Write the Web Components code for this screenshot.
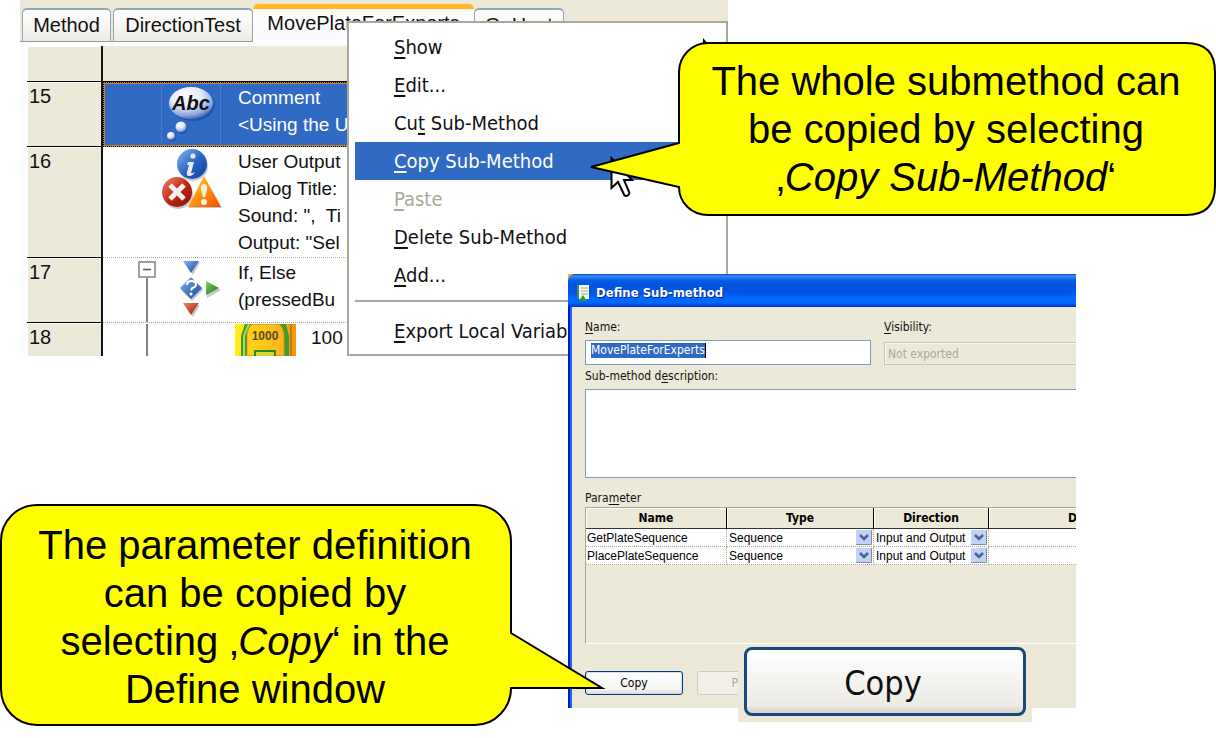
<!DOCTYPE html>
<html lang="en">
<head>
<meta charset="utf-8">
<title>Copying sub-methods</title>
<style>
  html, body { margin: 0; background: #fff; }
  body { min-height: 100vh; font-family: "Liberation Sans", Arial, sans-serif; color: #000; }
</style>
</head>
<body>
<slide-canvas>
  <method-editor slot="editor"></method-editor>
  <context-menu slot="menu">
    <menu-item arrow><u>S</u>how</menu-item>
    <menu-item><u>E</u>dit...</menu-item>
    <menu-item>Cu<u>t</u> Sub-Method</menu-item>
    <menu-item active><u>C</u>opy Sub-Method</menu-item>
    <menu-item disabled><u>P</u>aste</menu-item>
    <menu-item><u>D</u>elete Sub-Method</menu-item>
    <menu-item><u>A</u>dd...</menu-item>
    <menu-divider></menu-divider>
    <menu-item><u>E</u>xport Local Variab</menu-item>
  </context-menu>
  <mouse-pointer slot="pointer"></mouse-pointer>
  <define-dialog slot="dialog"></define-dialog>
  <copy-magnifier slot="magnifier">Copy</copy-magnifier>
  <call-out slot="note-top" tail="left">The whole submethod can<br>be copied by selecting<br>‚<i>Copy Sub-Method</i>‘</call-out>
  <call-out slot="note-bottom" tail="right">The parameter definition<br>can be copied by<br>selecting ‚<i>Copy</i>‘ in the<br>Define window</call-out>
</slide-canvas>

<script>
const define = (name, html, setup) => {
  const template = document.createElement('template');
  template.innerHTML = html;
  customElements.define(name, class extends HTMLElement {
    constructor() {
      super();
      this.attachShadow({ mode: 'open' }).append(template.content.cloneNode(true));
    }
    connectedCallback() { if (setup) setup(this, this.shadowRoot); }
  });
};

/* Free canvas: overlapping windows and notes pinned to their places */
define('slide-canvas', `
<style>
  :host { display: block; position: relative; min-height: 100vh; overflow: hidden; }
  ::slotted(*) { position: absolute; }
  ::slotted([slot=editor]) { left: 20px; top: 0; width: 708px; }
  ::slotted([slot=menu]) { left: 347px; top: 21px; width: 381px; }
  ::slotted([slot=pointer]) { left: 610px; top: 156px; }
  ::slotted([slot=dialog]) { left: 568px; top: 274px; width: 508px; }
  ::slotted([slot=magnifier]) { left: 738px; top: 644px; }
  ::slotted([slot=note-top]) { left: 678px; top: 42px; width: 538px; }
  ::slotted([slot=note-bottom]) { left: 0; top: 504px; width: 512px; }
</style>
<slot name="editor"></slot><slot name="menu"></slot><slot name="pointer"></slot>
<slot name="dialog"></slot><slot name="magnifier"></slot>
<slot name="note-top"></slot><slot name="note-bottom"></slot>`);

define('tab-button', `
<style>
  :host { display: block; }
  button { box-sizing: border-box; font: 20px/24px "Liberation Sans", Arial, sans-serif; color: #111; margin: 0; padding: 3px 0 4px;
    width: 100%; height: 34px; white-space: nowrap; border: 1px solid #91a7b4; border-width: 2px 1px 1px; border-bottom-color: #919b9c;
    border-radius: 5px 5px 0 0; background: linear-gradient(#fff, #f4f3ee 70%, #ecebe4); display: block; }
  :host([active]) button { height: 38px; background: #fcfcfe; padding: 2px 0 7px; border: 0;
    border-top: 5px solid #ffb92e; box-shadow: inset 0 1px #fff3d8; }
</style>
<button type="button" role="tab"><slot></slot></button>`);

define('method-row', `
<style>
  :host { display: grid; grid-template-columns: 74px 2px 1fr; line-height: 27px; font-size: 19px; color: #111;
    min-height: 33px; margin-left: 7px; }
  .num { background: #ece9d8; padding: 1px 0 0 2px; font-size: 20px; border-bottom: 1px solid #000; box-shadow: inset 1px 1px #fff; }
  .rule { background: #111; }
  .body { display: grid; grid-template-columns: 34px 24px 74px 1fr; padding-top: 1px;
    border-bottom: 1px dotted #aca899; background: #fff; }
  .tree { grid-column: 2; display: flex; flex-direction: column; align-items: center; width: 20px; }
  .icon { grid-column: 3; display: flex; align-items: flex-start; }
  .icon ::slotted(svg) { display: block; }
  .text { grid-column: 4; padding-left: 3px; white-space: nowrap; }
  :host([nested]) .body { grid-template-columns: 34px 24px 74px 72px 1fr; }
  :host([nested]) .icon { grid-column: 4; }
  :host([nested]) .text { grid-column: 5; padding-left: 4px; }
  :host([selected]) .body { background: #316ac5; color: #fff; border: 2px solid #c4862b; outline: 1px dotted #000;
    outline-offset: -1px; grid-template-columns: 32px 24px 74px 1fr; padding-top: 0; }
  :host([last]) .num, :host([last]) .body { border-bottom: 0; }
  :host([header]) { min-height: 36px; }
  :host([header]) .body { background: #ece9d8; border-bottom: 1px solid #000; }
</style>
<div class="num"><slot name="num"></slot></div>
<div class="rule"></div>
<div class="body">
  <div class="tree"><slot name="tree"></slot></div>
  <div class="icon"><slot name="icon"></slot></div>
  <div class="text"><slot></slot></div>
</div>`);

define('method-editor', `
<style>
  :host { display: block; background: #ece9d8; }
  .tabs { display: grid; grid-template-columns: 89px 142px 221px 90px; align-items: end;
    padding: 4px 0 0 2px; height: 38px; box-shadow: inset 0 -1px #919b9c; }
  .tabs tab-button:nth-child(2) { margin-left: 2px; }
  .gap { height: 4px; background: #fcfcfe; }
  .rows { background: #fcfcfe; height: 310px; overflow: hidden; }
  method-row.comment { height: 65px; }
  method-row.output { height: 111px; }
  method-row.branch { height: 65px; }
  .minus { display: block; }
</style>
<div class="tabs" role="tablist">
  <tab-button>Method</tab-button>
  <tab-button>DirectionTest</tab-button>
  <tab-button active>MovePlateForExperts</tab-button>
  <tab-button>OnHost</tab-button>
</div>
<div class="gap"></div>
<div class="rows">
  <method-row header></method-row>
  <method-row class="comment" selected>
    <span slot="num">15</span>
    <svg slot="icon" width="60" height="60" viewBox="0 0 60 60">
      <defs>
        <radialGradient id="cb" cx=".38" cy=".25" r=".8"><stop offset="0" stop-color="#fff"/><stop offset=".45" stop-color="#e4eaf8"/><stop offset=".8" stop-color="#8ba6de"/><stop offset="1" stop-color="#3158b0"/></radialGradient>
      </defs>
      <path d="M.5 0V60M59.5 0V60" stroke="#4a7bcd"/>
      <ellipse cx="32" cy="21" rx="22" ry="16" fill="#1c4694" opacity=".6"/>
      <ellipse cx="30" cy="19" rx="22" ry="16" fill="url(#cb)"/>
      <circle cx="21" cy="44" r="6" fill="#1c4694" opacity=".6"/><circle cx="20" cy="43" r="5.5" fill="url(#cb)"/>
      <circle cx="11" cy="53" r="4.500" fill="#1c4694" opacity=".6"/><circle cx="10" cy="52" r="4" fill="url(#cb)"/>
      <text x="30" y="26" text-anchor="middle" font-family="Liberation Sans, sans-serif" font-size="20" font-weight="700" font-style="italic" fill="#111">Abc</text>
    </svg>
    Comment<br>&lt;Using the U
  </method-row>
  <method-row class="output">
    <span slot="num">16</span>
    <svg slot="icon" width="62" height="62" viewBox="0 0 62 62">
      <defs>
        <linearGradient id="bl" x1="0" y1="0" x2="1" y2="1"><stop offset="0" stop-color="#8dbaf0"/><stop offset=".5" stop-color="#2c67c8"/><stop offset="1" stop-color="#0b3c9a"/></linearGradient>
        <linearGradient id="rd" x1="0" y1="0" x2="1" y2="1"><stop offset="0" stop-color="#ee8a6c"/><stop offset=".5" stop-color="#c02a14"/><stop offset="1" stop-color="#860d08"/></linearGradient>
        <linearGradient id="og" x1="0" y1="0" x2="1" y2="1"><stop offset="0" stop-color="#ffd21a"/><stop offset=".5" stop-color="#ff9410"/><stop offset="1" stop-color="#f04a00"/></linearGradient>
      </defs>
      <circle cx="32" cy="18" r="15" fill="#777" opacity=".4"/>
      <circle cx="31" cy="16" r="15" fill="url(#bl)"/>
      <circle cx="32" cy="8" r="2.600" fill="#e6ebf5"/>
      <path d="M27 14h6l-3 11q1 1 4-1-2 4-6 4-3 0-2-4l2-7h-2z" fill="#e6ebf5"/>
      <circle cx="17" cy="46" r="15" fill="#777" opacity=".4"/>
      <circle cx="16" cy="44" r="15" fill="url(#rd)"/>
      <path d="M9 37l14 14M23 37l-14 14" stroke="#f1eeee" stroke-width="5"/>
      <path d="M44 30L61 60H28z" fill="#777" opacity=".4"/>
      <path d="M43 28L60 59H27z" fill="url(#og)"/>
      <path d="M43 36q4 0 3 6l-2 7h-2l-2-7q-1-6 3-6z" fill="#eef0da"/><circle cx="43" cy="54" r="3" fill="#eef0da"/>
    </svg>
    User Output<br>Dialog Title:<br>Sound: ",&nbsp; Ti<br>Output: "Sel
  </method-row>
  <method-row class="branch">
    <span slot="num">17</span>
    <svg class="minus" slot="tree" width="18" height="63" viewBox="0 0 18 63">
      <path d="M9 19V63" stroke="#808080" stroke-width="2"/><rect x="1" y="3" width="16" height="15" fill="#fff" stroke="#808080" stroke-width="1.500"/><path d="M5 10.500H13" stroke="#555" stroke-width="1.500"/>
    </svg>
    <svg slot="icon" width="60" height="60" viewBox="0 0 60 60">
      <defs>
        <linearGradient id="b2" x1="0" y1="0" x2="1" y2="1"><stop offset="0" stop-color="#88b4ee"/><stop offset="1" stop-color="#0e429f"/></linearGradient>
        <linearGradient id="r2" x1="0" y1="0" x2="1" y2="1"><stop offset="0" stop-color="#ee8a6c"/><stop offset="1" stop-color="#980f08"/></linearGradient>
        <linearGradient id="g2" x1="0" y1="0" x2="1" y2="1"><stop offset="0" stop-color="#7ed25f"/><stop offset="1" stop-color="#117215"/></linearGradient>
      </defs>
      <g fill="#777" opacity=".4"><path d="M24 3h15L32 16z"/><path d="M31 19l11 12-11 11-11-11z"/><path d="M46 24l14 7-14 8z"/><path d="M24 46h15L32 58z"/></g>
      <path d="M22 2H38L30 14z" fill="url(#b2)"/>
      <path d="M30 18L41 29 30 40 19 29z" fill="url(#b2)"/>
      <path d="M26 26q0-4 4.500-4t4.500 3.500q0 2-2.500 3t-2 3" fill="none" stroke="#fff" stroke-width="2"/><circle cx="30" cy="35" r="1.500" fill="#fff"/>
      <path d="M45 22L58 29 45 36z" fill="url(#g2)"/>
      <path d="M22 44H38L30 56z" fill="url(#r2)"/>
    </svg>
    If, Else<br>(pressedBu
  </method-row>
  <method-row nested last>
    <span slot="num">18</span>
    <svg class="minus" slot="tree" width="18" height="32" viewBox="0 0 18 32"><path d="M9 0V32" stroke="#808080" stroke-width="2"/></svg>
    <svg slot="icon" width="61" height="32" viewBox="0 0 61 32">
      <defs><linearGradient id="y" x1="0" x2="1"><stop offset="0" stop-color="#fff11c"/><stop offset="1" stop-color="#f59410"/></linearGradient>
      <linearGradient id="y2" x1="0" x2="1"><stop offset="0" stop-color="#ffd51a"/><stop offset="1" stop-color="#ffb321"/></linearGradient></defs>
      <path d="M0 0H61V32H0z" fill="url(#y)"/><path d="M55 0h2v32h-2z" fill="#b97a20"/>
      <path d="M6 32V12Q8 6 10 0H51q1 6 3 12V32z" fill="#3c9c35"/>
      <path d="M9 32V12q2-6 5-12" fill="none" stroke="#a5dc58" stroke-width="2"/>
      <path d="M12 32V10Q13 3 17 0H44q4 3 5 10V32z" fill="url(#y2)" stroke="#e58a12"/>
      <text x="30" y="16" text-anchor="middle" font-family="Liberation Sans, sans-serif" font-weight="700" font-size="12" fill="#5b4a1e">1000</text>
      <path d="M20 27H40V33H20z" fill="none" stroke="#248c26" stroke-width="2"/><path d="M22 29h16v3H22z" fill="#c6dd3c"/>
    </svg>
    100
  </method-row>
</div>`);

define('context-menu', `
<style>
  :host { display: block; box-sizing: border-box; padding: 5px 5px 4px 6px; background: #fff; border: 2px solid #aca899;
    font: 20px/38px "DejaVu Sans Condensed", "DejaVu Sans", Tahoma, sans-serif; height: 335px; }
</style>
<div role="menu"><slot></slot></div>`);

define('menu-item', `
<style>
  :host { display: block; }
  button { font: inherit; color: #111; display: flex; align-items: center; justify-content: space-between; width: 100%; height: 38px;
    margin: 0; border: 0; padding: 0 10px 0 39px; background: none; text-align: left; white-space: nowrap; }
  :host([active]) button { background: #316ac5; color: #fff; }
  button:disabled { color: #aca899; }
  svg { display: none; }
  :host([arrow]) svg { display: block; }
  ::slotted(u) { text-underline-offset: 3px; text-decoration-thickness: 2px; text-decoration-skip-ink: none; }
</style>
<button type="button" role="menuitem"><span><slot></slot></span>
<svg width="9" height="18" viewBox="0 0 9 18"><path d="M1 0L9 9 1 18z" fill="#000"/></svg></button>`,
(host, root) => { root.querySelector('button').disabled = host.hasAttribute('disabled'); });

define('menu-divider', `
<style>
  :host { display: block; padding: 6px 0 10px; }
  div { height: 2px; background: #aca899; }
</style>
<div role="separator"></div>`);

define('mouse-pointer', `
<style>:host { display: block; } svg { display: block; }</style>
<svg width="24" height="42" viewBox="0 0 24 42" aria-hidden="true">
  <path d="M1.500 2V32L8 26 14.500 39.500Q18 41 19.500 37L14 24H22z" fill="#fff" stroke="#000" stroke-width="2"/>
</svg>`);

/* Table cell drop-down with its arrow button */
define('cell-select', `
<style>
  :host { display: flex; height: 17px; }
  select { appearance: none; flex: 1; min-width: 0; font: 12px/16px "Liberation Sans", Arial, sans-serif; color: #000;
    border: 0; margin: 0; padding: 0 0 0 1px; background: #fff; }
  svg { display: block; flex: none; margin-right: 1px; }
</style>
<select></select>
<svg width="16" height="17" viewBox="0 0 16 17" aria-hidden="true">
  <path d="M0 1H15V16H0z" fill="#c1d3fb"/><path d="M0 15.500H15.500V1" fill="none" stroke="#8a8f92"/>
  <path d="M4 6l4 4 4-4" fill="none" stroke="#4d6185" stroke-width="2.500"/>
</svg>`, (host, root) => {
  const select = root.querySelector('select');
  select.setAttribute('aria-label', host.getAttribute('label'));
  select.replaceChildren(new Option(host.getAttribute('value')));
});

define('define-dialog', `
<style>
  :host { display: block; overflow: hidden; background: linear-gradient(#ffad2c, #ffad2c) 0 0 / 8px 8px no-repeat;
    font: 12px/16px "DejaVu Sans Condensed", "DejaVu Sans", Tahoma, sans-serif; }
  header { display: flex; align-items: center; gap: 6px; height: 33px; padding: 5px 0 0 8px; box-sizing: border-box;
    border-radius: 7px 0 0 0; color: #fff; font-size: 13px; font-weight: 700; text-shadow: 1px 1px #0a2a8c; white-space: nowrap;
    background: linear-gradient(#0540c8 0, #3b8dff 2px, #2a7dfc 3px, #0560e8 6px, #0053dd 10px, #0056e6 19px, #0068ff 24px, #0068ff 29px, #003dcf 32px, #003dcf); }
  h1 { font: inherit; margin: 0; }
  .frame { border-left: 2px solid #0019cf; box-shadow: inset 2px 0 #166aee; background: #ece9d8;
    padding: 10px 0 13px 15px; }
  .inner { width: 634px; }
  .fields { display: grid; grid-template-columns: 286px 1fr; column-gap: 13px; align-items: end; row-gap: 5px; padding-top: 2px; }
  label, .caption { display: block; color: #111; }
  u { text-underline-offset: 2px; text-decoration-skip-ink: none; }
  input, textarea, select { box-sizing: border-box; font: inherit; margin: 0; border: 1px solid #7f9db9; border-radius: 0; background: #fff; outline: 0; }
  .name { display: flex; align-items: flex-start; height: 25px; background: #fff; border: 1px solid #7f9db9; box-sizing: border-box; padding: 2px 5px; }
  .name input { field-sizing: content; border: 0; border-right: 1px solid #000; padding: 0; height: 15px; line-height: 15px; background: #316ac5; color: #fff; }
  select { appearance: none; width: 300px; height: 23px; padding: 0 3px; color: #aca899; background: #ece9d8; border-color: #c9c7ba; opacity: 1; box-shadow: inset 1px 1px #f7f6ef; }
  .desc { margin: 3px 0 5px; }
  textarea { display: block; width: 100%; height: 89px; resize: none; }
  .caption { margin: 12px 0 1px; }
  .grid { border: 1px solid #aca899; border-bottom-color: #fff; height: 137px; box-sizing: border-box; }
  table { border-collapse: separate; border-spacing: 0; table-layout: fixed; width: 100%; font-family: "Liberation Sans", Arial, sans-serif; }
  th { box-sizing: border-box; height: 21px; padding: 0; border-right: 1px solid #000; border-bottom: 1px solid #333;
    font-size: 12px; line-height: 16px; font-family: "DejaVu Sans Condensed", "DejaVu Sans", sans-serif; box-shadow: inset 1px 1px #fff; }
  td { box-sizing: border-box; height: 18px; padding: 0 0 0 1px; line-height: 16px; background: #fff;
    border-right: 1px dotted #aca899; border-bottom: 1px dotted #aca899; white-space: nowrap; }
  .actions { display: flex; gap: 14px; padding-top: 27px; }
  .actions button { box-sizing: border-box; width: 98px; height: 24px; margin: 0; padding: 0; font: inherit; color: #000;
    border: 1px solid #003c74; border-radius: 3px; background: linear-gradient(#fff, #f3f3ef 80%, #dcd7cb); box-shadow: inset 0 0 0 1px #cee0f5; }
  .actions button:disabled { color: #aca899; border-color: #cfccbe; background: #f2f0e6; box-shadow: none; }
</style>
<header>
  <svg width="14" height="18" viewBox="0 0 14 18" aria-hidden="true">
    <path d="M2 1H13V15H2z" fill="#f4f8f0"/><path d="M1 1H3V15H1z" fill="#4b8a55"/>
    <path d="M5 4h7M5 7h7M5 10h7" stroke="#9bb3a0"/><path d="M7 11L11 17H3z" fill="#2f9a32"/>
  </svg>
  <h1>Define Sub-method</h1>
</header>
<div class="frame"><div class="inner">
  <div class="fields">
    <label for="name"><u>N</u>ame:</label>
    <label for="vis"><u>V</u>isibility:</label>
    <div class="name"><input id="name" type="text" value="MovePlateForExperts"></div>
    <select id="vis" disabled><option>Not exported</option></select>
  </div>
  <label class="desc" for="desc">Sub-method d<u>e</u>scription:</label>
  <textarea id="desc"></textarea>
  <div class="caption" id="cap">Para<u>m</u>eter</div>
  <div class="grid">
    <table aria-labelledby="cap">
      <colgroup><col style="width:141px"><col style="width:147px"><col style="width:115px"><col></colgroup>
      <thead><tr><th>Name</th><th>Type</th><th>Direction</th><th>Description</th></tr></thead>
      <tbody>
        <tr><td>GetPlateSequence</td><td><cell-select label="Type" value="Sequence"></cell-select></td><td><cell-select label="Direction" value="Input and Output"></cell-select></td><td></td></tr>
        <tr><td>PlacePlateSequence</td><td><cell-select label="Type" value="Sequence"></cell-select></td><td><cell-select label="Direction" value="Input and Output"></cell-select></td><td></td></tr>
      </tbody>
    </table>
  </div>
  <div class="actions"><button type="button">Copy</button><button type="button" disabled>Paste</button></div>
</div></div>`);

define('copy-magnifier', `
<style>
  :host { display: block; padding: 3px 6px 6px; background: #ece9d8; }
  button { display: block; box-sizing: border-box; width: 282px; height: 69px; margin: 0; padding: 3px 4px 0 0;
    border: 3px solid #1a4a7d; border-radius: 8px; color: #111; background: linear-gradient(#fff, #f2f1ed 60%, #ecebe6 88%, #d9d2c8);
    font: 34px/40px "DejaVu Sans Condensed", "DejaVu Sans", Tahoma, sans-serif; }
</style>
<button type="button"><slot></slot></button>`);

/* Speech bubble: drawn outline behind flowing text */
define('call-out', `
<style>
  :host { display: block; box-sizing: border-box; text-align: center; font: 40px/48px "Liberation Sans", Arial, sans-serif;
    padding: 15px 6px 15px 4px; }
  :host([tail=right]) { padding-top: 17px; padding-bottom: 13px; }
  svg { position: absolute; left: 0; top: 0; overflow: visible; }
  path { fill: #ff0; stroke: #000; stroke-width: 2; }
  p { margin: 0; position: relative; white-space: nowrap; }
</style>
<svg width="10" height="10" aria-hidden="true"><path></path></svg>
<p><slot></slot></p>`, (host, root) => {
  root.querySelector('path').setAttribute('d', host.getAttribute('tail') === 'left'
    ? 'M30 1H508Q537 1 537 30V144Q537 173 508 173H30C14 173 1 161 1 145L-87 125 1 101V30C1 14 14 1 30 1Z'
    : 'M37 1H475C495 1 511 17 511 37V129L602 184H511C511 204 495 221 475 221H37C17 221 1 205 1 185V37C1 17 17 1 37 1Z');
});
</script>
</body>
</html>
